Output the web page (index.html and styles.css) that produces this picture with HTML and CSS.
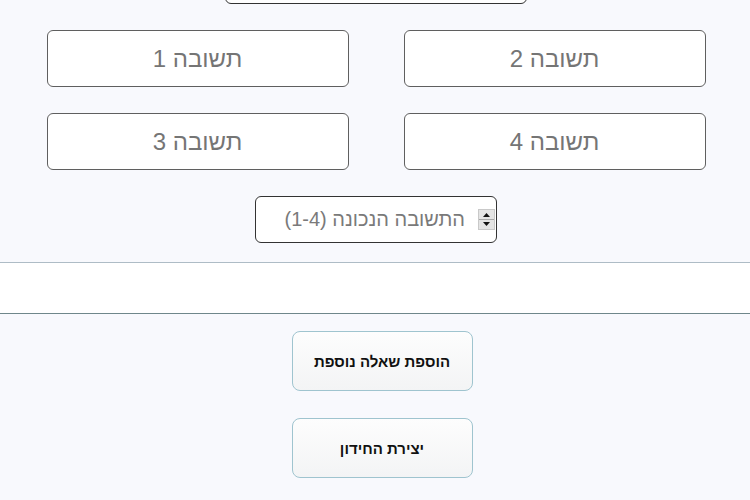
FILE: index.html
```html
<!DOCTYPE html>
<html lang="he">
<head>
<meta charset="utf-8">
<title>יצירת חידון</title>
<link rel="stylesheet" href="styles.css">
</head>
<body>
<main class="page">
  <section class="quiz">
    <input class="field field-question" type="text" dir="rtl" aria-label="שאלה">
    <div class="answers">
      <input class="field answer" type="text" dir="rtl" placeholder="תשובה 1">
      <input class="field answer" type="text" dir="rtl" placeholder="תשובה 2">
      <input class="field answer" type="text" dir="rtl" placeholder="תשובה 3">
      <input class="field answer" type="text" dir="rtl" placeholder="תשובה 4">
    </div>
    <div class="correct">
      <input class="correct-input" type="text" dir="rtl" placeholder="התשובה הנכונה (1-4)">
      <span class="spinner" aria-hidden="true">
        <svg width="17" height="21" viewBox="0 0 17 21">
          <rect x="0.5" y="0.5" width="16" height="20" fill="#e4e4e4" stroke="#c9c9c9"/>
          <line x1="1" y1="10.5" x2="16" y2="10.5" stroke="#a8a8a8"/>
          <path d="M5 8 L12 8 L8.5 4 Z" fill="#111"/>
          <path d="M5 13 L12 13 L8.5 17 Z" fill="#111"/>
        </svg>
      </span>
    </div>
  </section>
  <div class="band"></div>
  <div class="actions">
    <button class="btn" type="button">הוספת שאלה נוספת</button>
    <button class="btn" type="button">יצירת החידון</button>
  </div>
</main>
</body>
</html>
```
FILE: styles.css
```css
html, body {
  margin: 0;
  padding: 0;
  background: #f8f9fd;
  overflow: hidden;
}
body {
  font-family: "Liberation Sans", "DejaVu Sans", sans-serif;
}
.page {
  display: flex;
  flex-direction: column;
  align-items: center;
  padding-left: 2px;
}
.quiz {
  display: flex;
  flex-direction: column;
  align-items: center;
  margin-top: -53px;
}
.field {
  box-sizing: border-box;
  width: 302px;
  height: 57px;
  border: 1px solid #5f5f5f;
  border-radius: 6px;
  background: #fff;
  font-family: "Liberation Sans", "DejaVu Sans", sans-serif;
  font-size: 24px;
  color: #333;
  text-align: center;
  padding: 0 10px;
  outline: none;
}
.field::placeholder {
  color: #757575;
  opacity: 1;
}
.field-question {
  border-color: #333;
}
.answers {
  display: grid;
  grid-template-columns: 302px 302px;
  column-gap: 55px;
  row-gap: 26px;
  margin-top: 26px;
}
.answer {
  height: 57px;
}
.correct {
  box-sizing: border-box;
  display: flex;
  align-items: center;
  width: 242px;
  height: 47px;
  margin-top: 26px;
  border: 1px solid #333;
  border-radius: 6px;
  background: #fff;
  padding: 0 1px 0 8px;
}
.correct-input {
  flex: 1;
  min-width: 0;
  border: 0;
  outline: none;
  background: transparent;
  font-family: "Liberation Sans", "DejaVu Sans", sans-serif;
  font-size: 20px;
  text-align: right;
  padding: 0 13px 0 0;
}
.correct-input::placeholder {
  color: #7a7a7a;
  opacity: 1;
}
.spinner {
  display: flex;
  width: 17px;
  height: 21px;
}
.band {
  align-self: stretch;
  margin-left: -2px;
  height: 50px;
  margin-top: 19px;
  background: #fff;
  border-top: 1px solid #aebcc6;
  border-bottom: 1px solid #6f878b;
}
.actions {
  display: flex;
  flex-direction: column;
  align-items: center;
  gap: 27px;
  margin-top: 17px;
  margin-left: 12px;
}
.btn {
  box-sizing: border-box;
  width: 181px;
  height: 60px;
  border: 1px solid #9fc4cf;
  border-radius: 8px;
  background: linear-gradient(#fdfdfd, #f3f4f5);
  font-family: "Liberation Sans", "DejaVu Sans", sans-serif;
  font-weight: bold;
  font-size: 15px;
  color: #111;
  cursor: pointer;
}
```
